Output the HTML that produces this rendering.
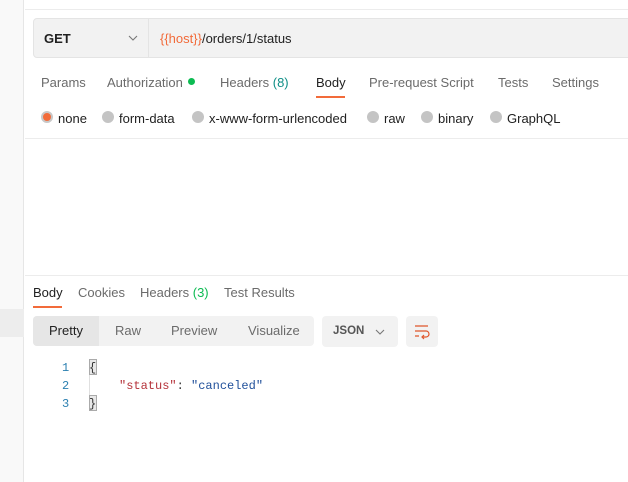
<!DOCTYPE html>
<html><head><meta charset="utf-8"><style>
*{margin:0;padding:0;box-sizing:border-box}
body{width:628px;height:482px;overflow:hidden;background:#fff;font-family:"Liberation Sans",sans-serif;font-size:13px;color:#6b6b6b;position:relative}
.a{position:absolute;white-space:nowrap}
.r{position:absolute;width:12px;height:12px;border-radius:50%;background:#c4c4c4}
.mono{font-family:"Liberation Mono",monospace;font-size:12px}
</style></head><body>
<div class="a" style="left:0;top:0;width:24px;height:482px;background:#f9f9f9;border-right:1px solid #e6e6e6"></div>
<div class="a" style="left:0;top:309px;width:24px;height:28px;background:#ededed"></div>
<div class="a" style="left:25px;top:9px;width:603px;height:1px;background:#ececec"></div>
<div class="a" style="left:33px;top:18px;width:600px;height:40px;background:#f2f2f2;border:1px solid #e4e4e4;border-radius:4px"></div>
<div class="a" style="left:148px;top:19px;width:1px;height:38px;background:#e4e4e4"></div>
<div class="a" style="left:44px;top:31px;font-weight:bold;color:#212121;font-size:13px">GET</div>
<svg class="a" style="left:128px;top:35px" width="10" height="6"><path d="M1 1l4 4 4-4" fill="none" stroke="#777" stroke-width="1.1"/></svg>
<div class="a" style="left:160px;top:31px;font-size:13px;color:#212121"><span style="color:#f26b3a">{{host}}</span>/orders/1/status</div>

<div class="a" style="left:41px;top:75px">Params</div>
<div class="a" style="left:107px;top:75px">Authorization</div>
<div class="a" style="left:188px;top:78px;width:7px;height:7px;border-radius:50%;background:#0cbb52"></div>
<div class="a" style="left:220px;top:75px">Headers <span style="color:#0f8f87">(8)</span></div>
<div class="a" style="left:316px;top:75px;color:#212121">Body</div>
<div class="a" style="left:316px;top:96px;width:29px;height:2px;background:#f26b3a"></div>
<div class="a" style="left:369px;top:75px">Pre-request Script</div>
<div class="a" style="left:498px;top:75px">Tests</div>
<div class="a" style="left:552px;top:75px">Settings</div>

<div class="r" style="left:41px;top:111px;background:#f26b3a;border:2px solid #c8c8c8"></div>
<div class="a" style="left:58px;top:111px;color:#212121">none</div>
<div class="r" style="left:102px;top:111px"></div><div class="a" style="left:119px;top:111px;color:#212121">form-data</div>
<div class="r" style="left:192px;top:111px"></div><div class="a" style="left:209px;top:111px;color:#212121">x-www-form-urlencoded</div>
<div class="r" style="left:367px;top:111px"></div><div class="a" style="left:384px;top:111px;color:#212121">raw</div>
<div class="r" style="left:421px;top:111px"></div><div class="a" style="left:438px;top:111px;color:#212121">binary</div>
<div class="r" style="left:490px;top:111px"></div><div class="a" style="left:507px;top:111px;color:#212121">GraphQL</div>

<div class="a" style="left:25px;top:138px;width:603px;height:1px;background:#ececec"></div>
<div class="a" style="left:25px;top:275px;width:603px;height:1px;background:#ececec"></div>

<div class="a" style="left:33px;top:285px;color:#212121">Body</div>
<div class="a" style="left:33px;top:306px;width:29px;height:2px;background:#f26b3a"></div>
<div class="a" style="left:78px;top:285px">Cookies</div>
<div class="a" style="left:140px;top:285px">Headers <span style="color:#0cbb52">(3)</span></div>
<div class="a" style="left:224px;top:285px">Test Results</div>

<div class="a" style="left:33px;top:316px;width:281px;height:30px;background:#f2f2f2;border-radius:4px"></div>
<div class="a" style="left:33px;top:316px;width:66px;height:30px;background:#e6e6e6;border-radius:4px 0 0 4px"></div>
<div class="a" style="left:49px;top:323px;color:#212121">Pretty</div>
<div class="a" style="left:115px;top:323px">Raw</div>
<div class="a" style="left:171px;top:323px">Preview</div>
<div class="a" style="left:248px;top:323px">Visualize</div>
<div class="a" style="left:322px;top:316px;width:76px;height:31px;background:#f2f2f2;border-radius:4px"></div>
<div class="a" style="left:333px;top:325px;font-weight:bold;color:#555;font-size:11.5px">JSON</div>
<svg class="a" style="left:375px;top:329px" width="10" height="6"><path d="M1 1l4 4 4-4" fill="none" stroke="#777" stroke-width="1.1"/></svg>
<div class="a" style="left:406px;top:316px;width:32px;height:31px;background:#f2f2f2;border-radius:4px"></div>
<svg class="a" style="left:413px;top:322px" width="18" height="18"><path d="M2 4h13M2 9h11a3 3 0 0 1 0 6h-3M2 14h4M11 13l-2 2 2 2" fill="none" stroke="#e0552b" stroke-width="1.2"/></svg>

<div class="a mono" style="left:62px;top:361px;color:#2a7fb0">1</div>
<div class="a mono" style="left:62px;top:379px;color:#2a7fb0">2</div>
<div class="a mono" style="left:62px;top:397px;color:#2a7fb0">3</div>
<div class="a" style="left:89px;top:359px;width:8px;height:16px;background:#e8e8e8;border:1px solid #aaa"></div>
<div class="a" style="left:89px;top:395px;width:8px;height:16px;background:#e8e8e8;border:1px solid #aaa"></div>
<div class="a" style="left:89px;top:375px;width:1px;height:20px;background:#e0e0e0"></div>
<div class="a mono" style="left:89px;top:361px;color:#333">{</div>
<div class="a mono" style="left:89px;top:397px;color:#333">}</div>
<div class="a mono" style="left:119px;top:379px;color:#333"><span style="color:#b5323a">"status"</span>: <span style="color:#1f4f9a">"canceled"</span></div>
</body></html>
